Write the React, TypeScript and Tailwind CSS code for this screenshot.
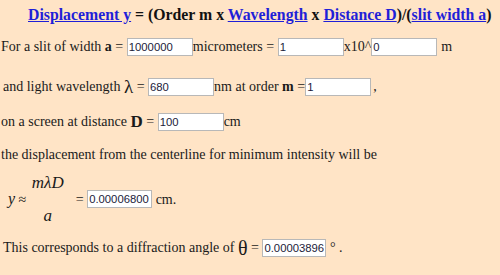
const serif = { fontFamily: '"Liberation Serif", "Times New Roman", serif' };

function Field({ value, w = "w-[66px]" }: { value: string; w?: string }) {
  return (
    <input
      readOnly
      value={value}
      className={`${w} h-[18px] border border-[#b8b8b8] bg-white px-[1px] align-middle font-['Liberation_Sans',Arial,sans-serif] text-[11.3px] text-[#1c1c3a] outline-none`}
    />
  );
}

function A({ children }: { children: React.ReactNode }) {
  return <span className="text-[#1f1fd8] underline">{children}</span>;
}

export default function App() {
  return (
    <div className="h-[275px] w-[500px] overflow-hidden bg-[#ffe4c6] text-[14px] text-[#1a1a1a]" style={serif}>
      <div className="whitespace-nowrap pl-[28px] pt-[5px] text-[15.8px] leading-[20px] font-bold text-[#111]">
        <A>Displacement y</A> = (Order m x <A>Wavelength</A> x <A>Distance D</A>)/(<A>slit width a</A>)
      </div>

      <div className="mt-[11px] flex items-center whitespace-nowrap pl-[1px]">
        <span>
          For a slit of width <b>a</b> =&nbsp;
        </span>
        <Field value="1000000" />
        <span>micrometers =&nbsp;</span>
        <Field value="1" />
        <span>x10^</span>
        <Field value="0" />
        <span className="ml-[4px]">m</span>
      </div>

      <div className="mt-[19px] flex items-center whitespace-nowrap pl-[3px]">
        <span>and light wavelength&nbsp;</span>
        <span className="text-[19px] leading-none">λ</span>
        <span>&nbsp;=&nbsp;</span>
        <Field value="680" />
        <span>nm at order&nbsp;</span>
        <b>m</b>
        <span>&nbsp;=</span>
        <Field value="1" />
        <span className="ml-[2px]">,</span>
      </div>

      <div className="mt-[14px] flex items-center whitespace-nowrap pl-[1px]">
        <span>on a screen at distance&nbsp;</span>
        <b className="text-[17px] leading-none">D</b>
        <span>&nbsp;=&nbsp;</span>
        <Field value="100" />
        <span>cm</span>
      </div>

      <div className="mt-[14px] whitespace-nowrap pl-[1px] leading-[18px]">the displacement from the centerline for minimum intensity will be</div>

      <div className="mt-[20px] flex items-center whitespace-nowrap pl-[8px]">
        <span className="text-[16px] italic">y</span>
        <span>&nbsp;≈&nbsp;</span>
        <span className="-my-[12px] inline-flex flex-col items-center gap-[12px] px-[2px] text-[17px] italic leading-[21px]">
          <span>mλD</span>
          <span className="text-[17px]">a</span>
        </span>
        <span className="ml-[10px]">=&nbsp;</span>
        <Field value="0.00006800" w="w-[65px]" />
        <span>&nbsp;cm.</span>
      </div>

      <div className="mt-[23px] flex items-center whitespace-nowrap pl-[3px]">
        <span>This corresponds to a diffraction angle of&nbsp;</span>
        <span className="text-[20px] leading-none">θ</span>
        <span>&nbsp;=&nbsp;</span>
        <Field value="0.00003896" w="w-[64px]" />
        <span>&nbsp;°&nbsp;.</span>
      </div>
    </div>
  );
}
